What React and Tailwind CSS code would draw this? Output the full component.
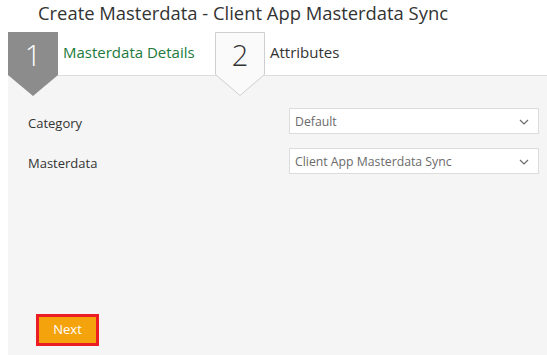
import React from "react";

function Chevron() {
  return (
    <svg width="10" height="6" viewBox="0 0 10 6" className="shrink-0 mt-[2px]">
      <path d="M1 1 L5 5 L9 1" fill="none" stroke="#6b6b6b" strokeWidth="1.2" />
    </svg>
  );
}

function Step({ n, active }) {
  return (
    <div className="relative w-[50px] h-[43px] shrink-0">
      <svg width="51" height="66" viewBox="0 0 51 66" className="absolute left-0 top-0 z-10 overflow-visible">
        {active ? (
          <polygon points="0,0 50,0 50,43 25,64 0,43" fill="#8c8c8c" />
        ) : (
          <polygon points="0.5,0.5 49.5,0.5 49.5,42.5 25,63.5 0.5,42.5" fill="#fafafa" stroke="#cfcfcf" strokeWidth="1" />
        )}
      </svg>
      <div
        className={`relative z-20 flex h-full items-center justify-center pt-[2px] text-[29px] font-light leading-none ${
          active ? "text-white" : "text-[#333]"
        }`}
      >
        {n}
      </div>
    </div>
  );
}

function Select({ value }) {
  return (
    <div className="flex h-[26px] w-[250px] items-center justify-between border border-[#dcdcdc] bg-white pl-[5px] pr-[9px] text-[12.25px] text-[#6a6a6a]">
      <span className="pt-[2px]">{value}</span>
      <Chevron />
    </div>
  );
}

export default function App() {
  return (
    <div
      className="w-[547px] h-[355px] overflow-hidden bg-white flex flex-col"
      style={{ fontFamily: '"Open Sans", "Noto Sans", sans-serif' }}
    >
      <div className="h-[32px] pl-[38px] text-[18.4px] leading-[26px] text-[#333]">
        Create Masterdata - Client App Masterdata Sync
      </div>
      <div className="flex h-[43px] items-center pl-[8px]">
        <Step n="1" active />
        <div className="ml-[5px] w-[152px] text-[15px] text-[#217a3c] pb-[3px]">Masterdata Details</div>
        <Step n="2" />
        <div className="ml-[5px] text-[15px] text-[#333] pb-[3px]">Attributes</div>
      </div>
      <div className="ml-[8px] flex flex-1 flex-col border-t border-[#dcdcdc] bg-[#f5f5f5] pl-[20px] pr-[8px]">
        <div className="mt-[32px] flex flex-col gap-[14px]">
          <div className="flex items-center justify-between">
            <span className="pt-[5px] text-[13px] text-[#333]">Category</span>
            <Select value="Default" />
          </div>
          <div className="flex items-center justify-between">
            <span className="pt-[5px] text-[13px] text-[#333]">Masterdata</span>
            <Select value="Client App Masterdata Sync" />
          </div>
        </div>
        <div className="mt-auto mb-[9px] ml-[8px]">
          <button className="flex h-[32px] w-[63px] items-center justify-center border-[3px] border-[#ec1c24] bg-[#f4a30c] text-[13px] text-white">
            Next
          </button>
        </div>
      </div>
    </div>
  );
}
